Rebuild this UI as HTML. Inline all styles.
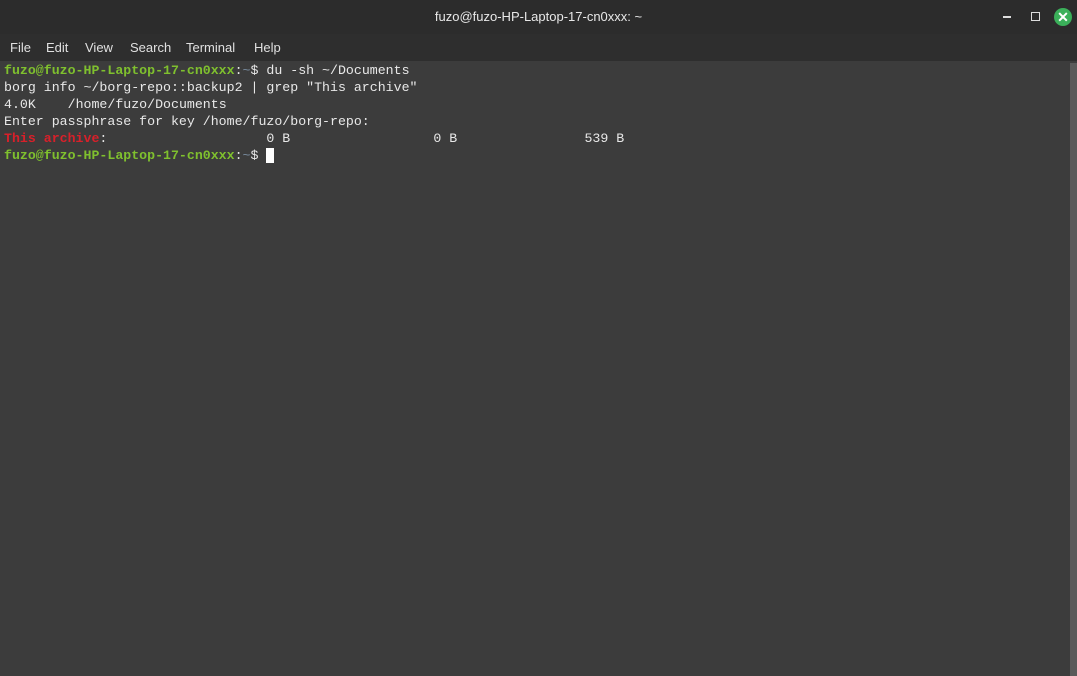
<!DOCTYPE html><html><head><style>
body{margin:0;width:1077px;height:676px;overflow:hidden;background:#3c3c3c;font-family:"Liberation Sans",sans-serif;position:relative}
#title{position:absolute;left:0;top:0;width:1077px;height:34px;background:#2c2c2c;color:#e8e8e8;font-size:13px;text-align:center;line-height:34px}
#menu{position:absolute;left:0;top:34px;width:1077px;height:27px;background:#2e2e2e;color:#e0e0e0;font-size:13px;line-height:27px}
#menu span{position:absolute;top:0}
#term{position:absolute;left:4px;top:62px;font-family:"Liberation Mono",monospace;font-size:13.25px;line-height:17px;color:#e8e8e8;white-space:pre}
.g{color:#7fc02e;font-weight:bold}.r{color:#d8202a;font-weight:bold}.b{color:#7a8da0}
#sb{position:absolute;left:1070px;top:63px;width:7px;height:613px;background:#5a5a5a}
</style></head><body>
<div id="title">fuzo@fuzo-HP-Laptop-17-cn0xxx: ~</div>
<div style="position:absolute;left:1003px;top:16px;width:8px;height:1.5px;background:#ddd"></div>
<div style="position:absolute;left:1031px;top:12px;width:7px;height:7px;border:1.5px solid #ddd"></div>
<div style="position:absolute;left:1054px;top:8px;width:18px;height:18px;border-radius:50%;background:#3bb05a;color:#fff;font-size:14px;font-weight:bold;text-align:center;line-height:18px">✕</div>
<div id="menu"><span style="left:10px">File</span><span style="left:46px">Edit</span><span style="left:85px">View</span><span style="left:130px">Search</span><span style="left:186px">Terminal</span><span style="left:254px">Help</span></div>
<div id="term"><span class="g">fuzo@fuzo-HP-Laptop-17-cn0xxx</span>:<span class="b">~</span>$ du -sh ~/Documents
borg info ~/borg-repo::backup2 | grep "This archive"
4.0K	/home/fuzo/Documents
Enter passphrase for key /home/fuzo/borg-repo: 
<span class="r">This archive</span>:                    0 B                  0 B                539 B
<span class="g">fuzo@fuzo-HP-Laptop-17-cn0xxx</span>:<span class="b">~</span>$ <span style="background:#fff"> </span></div>
<div id="sb"></div>
</body></html>
